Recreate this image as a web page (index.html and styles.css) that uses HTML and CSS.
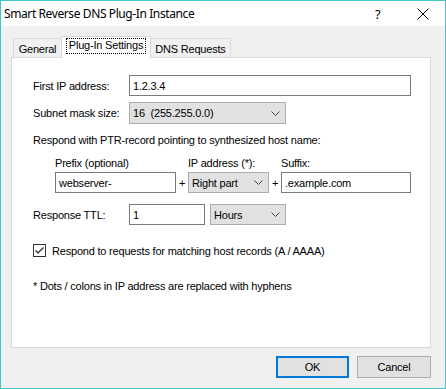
FILE: index.html
```html
<!DOCTYPE html>
<html>
<head>
<meta charset="utf-8">
<link rel="stylesheet" href="styles.css">
</head>
<body>
<div class="window">
  <div class="titlebar">
    <span class="title">Smart Reverse DNS Plug-In Instance</span>
    <span class="help">?</span>
    <span class="close"><svg width="12" height="12" viewBox="0 0 12 12"><path d="M0.5 0.5 L11.5 11.5 M11.5 0.5 L0.5 11.5" stroke="#000" stroke-width="1" fill="none"/></svg></span>
  </div>
  <div class="client">
    <div class="tabs">
      <div class="tab t-general">General</div>
      <div class="tab active"><span class="focus">Plug-In Settings</span></div>
      <div class="tab t-dns">DNS Requests</div>
    </div>
    <div class="panel">
      <div class="row r1">
        <span class="lbl">First IP address:</span>
        <div class="edit ip">1.2.3.4</div>
      </div>
      <div class="row r2">
        <span class="lbl">Subnet mask size:</span>
        <div class="combo subnet"><span>16&nbsp; (255.255.0.0)</span><svg class="chev" width="9" height="5" viewBox="0 0 9 5"><path d="M0.5 0.5 L4.5 4.5 L8.5 0.5" stroke="#444" stroke-width="1" fill="none"/></svg></div>
      </div>
      <div class="para">Respond with PTR-record pointing to synthesized host name:</div>
      <div class="ptr">
        <span class="sub">Prefix (optional)</span>
        <span></span>
        <span class="sub">IP address (*):</span>
        <span></span>
        <span class="sub">Suffix:</span>
        <div class="edit">webserver-</div>
        <span class="plus">+</span>
        <div class="combo"><span>Right part</span><svg class="chev" width="9" height="5" viewBox="0 0 9 5"><path d="M0.5 0.5 L4.5 4.5 L8.5 0.5" stroke="#444" stroke-width="1" fill="none"/></svg></div>
        <span class="plus">+</span>
        <div class="edit">.example.com</div>
      </div>
      <div class="row r3">
        <span class="lbl">Response TTL:</span>
        <div class="edit ttl">1</div>
        <div class="combo hours"><span>Hours</span><svg class="chev" width="9" height="5" viewBox="0 0 9 5"><path d="M0.5 0.5 L4.5 4.5 L8.5 0.5" stroke="#444" stroke-width="1" fill="none"/></svg></div>
      </div>
      <div class="check">
        <span class="box"><svg width="11" height="11" viewBox="0 0 11 11"><path d="M1.5 5.5 L4 8 L9.5 2.5" stroke="#222" stroke-width="1.2" fill="none"/></svg></span>
        <span>Respond to requests for matching host records (A / AAAA)</span>
      </div>
      <div class="note">* Dots / colons in IP address are replaced with hyphens</div>
    </div>
    <div class="buttons">
      <div class="btn ok">OK</div>
      <div class="btn">Cancel</div>
    </div>
  </div>
</div>
</body>
</html>
```

FILE: styles.css
```css
* { box-sizing: border-box; }
html, body { margin: 0; padding: 0; }
body {
  font-family: "Liberation Sans", Arial, sans-serif;
  font-size: 11px;
  letter-spacing: -0.2px;
  color: #000;
  background: #f0f0f0;
}
.window {
  width: 446px;
  height: 389px;
  border: 1px solid #45c6c6;
  display: flex;
  flex-direction: column;
  background: #f0f0f0;
}
.titlebar {
  height: 25px;
  background: #fff;
  display: flex;
  align-items: center;
  padding-left: 3px;
  flex: none;
}
.title {
  font-family: "Noto Sans", "Open Sans", sans-serif;
  font-size: 12px;
  flex: 1;
  letter-spacing: -0.4px;
}
.help {
  font-family: "Noto Sans", sans-serif;
  font-size: 13px;
  width: 12px;
  margin-right: 30px;
}
.close {
  width: 12px;
  height: 12px;
  margin-right: 16px;
  display: flex;
}
.client {
  flex: 1;
  padding: 10px 14px 0 10px;
  display: flex;
  flex-direction: column;
}
.tabs {
  height: 21px;
  display: flex;
  align-items: flex-end;
  padding-left: 2px;
}
.tab {
  height: 19px;
  border: 1px solid #d9d9d9;
  border-bottom: none;
  background: #f0f0f0;
  display: flex;
  align-items: center;
  justify-content: center;
  padding-top: 1px;
}
.t-general { width: 48px; border-right: none; }
.t-dns { width: 80px; border-left: none; }
.tab.active {
  width: 90px;
  height: 22px;
  margin-bottom: -1px;
  background: #fff;
  position: relative;
  z-index: 1;
  align-items: flex-start;
  padding-top: 2px;
}
.focus {
  outline: 1px dotted #000;
  padding: 0 2px 1px 2px;
  line-height: 13px;
}
.panel {
  height: 291px;
  background: #fff;
  border: 1px solid #d9d9d9;
  padding: 17px 0 0 21px;
}
.row {
  display: flex;
  align-items: center;
}
.lbl { width: 96px; }
.edit {
  height: 21px;
  border: 1px solid #7a7a7a;
  background: #fff;
  display: flex;
  align-items: center;
  padding-left: 3px;
}
.combo {
  height: 21px;
  border: 1px solid #adadad;
  background: #e1e1e1;
  display: flex;
  align-items: center;
  justify-content: space-between;
  padding: 0 5px 0 3px;
}
.ip { width: 282px; }
.r2 { margin-top: 6px; }
.subnet { width: 157px; height: 22px; }
.para {
  margin-top: 10px;
  line-height: 13px;
}
.ptr {
  margin-top: 10px;
  margin-left: 22px;
  display: grid;
  grid-template-columns: 121px 12px 81px 12px 130px;
  grid-template-rows: 13px 21px;
  row-gap: 2px;
  align-items: center;
}
.sub { line-height: 13px; }
.plus { text-align: center; }
.r3 { margin-top: 11px; }
.ttl { width: 76px; }
.hours { width: 76px; margin-left: 5px; }
.check {
  margin-top: 19px;
  display: flex;
  align-items: center;
  height: 13px;
}
.box {
  width: 13px;
  height: 13px;
  border: 1px solid #333;
  background: #fff;
  display: flex;
  align-items: center;
  justify-content: center;
  margin-right: 6px;
}
.note {
  margin-top: 23px;
  line-height: 13px;
}
.buttons {
  margin-top: 8px;
  display: flex;
  justify-content: flex-end;
  gap: 8px;
}
.btn {
  width: 74px;
  height: 22px;
  background: #e1e1e1;
  border: 1px solid #adadad;
  display: flex;
  align-items: center;
  justify-content: center;
}
.btn.ok {
  width: 73px;
  border: 2px solid #0078d7;
}
```
